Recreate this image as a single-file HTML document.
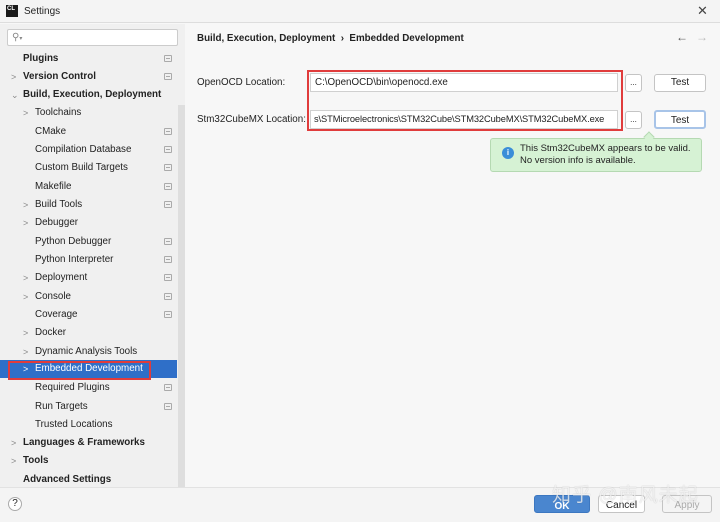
<!DOCTYPE html>
<html><head><meta charset="utf-8"><style>
*{margin:0;padding:0;box-sizing:border-box}
body{width:720px;height:522px;overflow:hidden;background:#f7f7f7;font-family:"Liberation Sans","Noto Sans CJK SC",sans-serif;font-size:9.8px;color:#222;position:relative}
.abs{position:absolute}
.row{position:absolute;left:0;width:177px;height:18px;line-height:18px;white-space:nowrap}
.row .t{position:absolute}
.b{font-weight:bold}
.arr{position:absolute;color:#888;font-size:9px}
.ic{position:absolute;left:164px;top:5px;width:8px;height:7px;border:1px solid #aaa;border-radius:1px}
.ic:after{content:"";position:absolute;left:1px;right:1px;top:2px;height:1px;background:#aaa}
.btn{position:absolute;background:#fff;border:1px solid #c4c4c4;border-radius:3px;text-align:center;font-size:10px}
</style></head><body>
<div class="abs" style="left:0;top:0;width:720px;height:23px;background:#f4f4f4;border-bottom:1px solid #ddd"></div>
<div class="abs" style="left:6px;top:5px;width:12px;height:12px;background:#1a1a1a;color:#fff;font-size:6px;font-weight:bold;line-height:8px;padding-left:1px">CL</div>
<div class="abs" style="left:24px;top:6px;font-size:10px">Settings</div>
<div class="abs" style="left:697px;top:3px;font-size:13px;color:#444">✕</div>
<div class="abs" style="left:0;top:24px;width:185px;height:464px;background:#f0f0f0"></div>
<div class="abs" style="left:178px;top:105px;width:7px;height:383px;background:#dedede"></div>
<div class="abs" style="left:7px;top:29px;width:171px;height:17px;background:#fff;border:1px solid #ccc;border-radius:2px;color:#888;font-size:10px;padding-left:4px;line-height:15px">⚲<span style="font-size:6px">▾</span></div>

<div class="row" style="top:50px"><span class="t b" style="left:23px">Plugins</span><span class="ic"></span></div>
<div class="row" style="top:68px"><span class="arr" style="left:11px">&gt;</span><span class="t b" style="left:23px">Version Control</span><span class="ic"></span></div>
<div class="row" style="top:86px"><span class="arr" style="left:11px">⌄</span><span class="t b" style="left:23px">Build, Execution, Deployment</span></div>
<div class="row" style="top:104px"><span class="arr" style="left:23px">&gt;</span><span class="t" style="left:35px">Toolchains</span></div>
<div class="row" style="top:123px"><span class="t" style="left:35px">CMake</span><span class="ic"></span></div>
<div class="row" style="top:141px"><span class="t" style="left:35px">Compilation Database</span><span class="ic"></span></div>
<div class="row" style="top:159px"><span class="t" style="left:35px">Custom Build Targets</span><span class="ic"></span></div>
<div class="row" style="top:178px"><span class="t" style="left:35px">Makefile</span><span class="ic"></span></div>
<div class="row" style="top:196px"><span class="arr" style="left:23px">&gt;</span><span class="t" style="left:35px">Build Tools</span><span class="ic"></span></div>
<div class="row" style="top:214px"><span class="arr" style="left:23px">&gt;</span><span class="t" style="left:35px">Debugger</span></div>
<div class="row" style="top:233px"><span class="t" style="left:35px">Python Debugger</span><span class="ic"></span></div>
<div class="row" style="top:251px"><span class="t" style="left:35px">Python Interpreter</span><span class="ic"></span></div>
<div class="row" style="top:269px"><span class="arr" style="left:23px">&gt;</span><span class="t" style="left:35px">Deployment</span><span class="ic"></span></div>
<div class="row" style="top:288px"><span class="arr" style="left:23px">&gt;</span><span class="t" style="left:35px">Console</span><span class="ic"></span></div>
<div class="row" style="top:306px"><span class="t" style="left:35px">Coverage</span><span class="ic"></span></div>
<div class="row" style="top:324px"><span class="arr" style="left:23px">&gt;</span><span class="t" style="left:35px">Docker</span></div>
<div class="row" style="top:343px"><span class="arr" style="left:23px">&gt;</span><span class="t" style="left:35px">Dynamic Analysis Tools</span></div>
<div class="row" style="top:360px;background:#2f6fc8;color:#fff"><span class="arr" style="left:23px;color:#fff">&gt;</span><span class="t" style="left:35px">Embedded Development</span></div>
<div class="abs" style="left:8px;top:361px;width:143px;height:19px;border:2px solid #e03c3c"></div>
<div class="row" style="top:379px"><span class="t" style="left:35px">Required Plugins</span><span class="ic"></span></div>
<div class="row" style="top:398px"><span class="t" style="left:35px">Run Targets</span><span class="ic"></span></div>
<div class="row" style="top:416px"><span class="t" style="left:35px">Trusted Locations</span></div>
<div class="row" style="top:434px"><span class="arr" style="left:11px">&gt;</span><span class="t b" style="left:23px">Languages &amp; Frameworks</span></div>
<div class="row" style="top:452px"><span class="arr" style="left:11px">&gt;</span><span class="t b" style="left:23px">Tools</span></div>
<div class="row" style="top:471px"><span class="t b" style="left:23px">Advanced Settings</span></div>

<div class="abs b" style="left:197px;top:33px">Build, Execution, Deployment &nbsp;›&nbsp; Embedded Development</div>
<div class="abs" style="left:676px;top:30px;font-size:12px;color:#555">←</div>
<div class="abs" style="left:696px;top:30px;font-size:12px;color:#bbb">→</div>

<div class="abs" style="left:197px;top:77px">OpenOCD Location:</div>
<div class="abs" style="left:197px;top:114px">Stm32CubeMX Location:</div>
<div class="abs" style="left:307px;top:70px;width:316px;height:61px;border:2px solid #e03c3c"></div>
<div class="abs" style="left:310px;top:73px;width:308px;height:19px;background:#fff;border:1px solid #d0d0d0;padding-left:4px;line-height:17px">C:\OpenOCD\bin\openocd.exe</div>
<div class="abs" style="left:310px;top:110px;width:308px;height:19px;background:#fff;border:1px solid #d0d0d0;padding-left:3px;line-height:17px;white-space:nowrap;overflow:hidden;font-size:9.3px;letter-spacing:-0.1px">s\STMicroelectronics\STM32Cube\STM32CubeMX\STM32CubeMX.exe</div>
<div class="btn" style="left:625px;top:74px;width:17px;height:18px;line-height:16px;font-size:8px">...</div>
<div class="btn" style="left:625px;top:111px;width:17px;height:18px;line-height:16px;font-size:8px">...</div>
<div class="btn" style="left:654px;top:74px;width:52px;height:18px;line-height:16px">Test</div>
<div class="btn" style="left:654px;top:110px;width:52px;height:19px;line-height:17px;border:2px solid #a8c4e8">Test</div>
<div class="abs" style="left:490px;top:138px;width:212px;height:34px;background:#d6f2d4;border:1px solid #b5d9b2;border-radius:3px"></div>
<div class="abs" style="left:645px;top:133px;width:8px;height:8px;background:#d6f2d4;border-left:1px solid #b5d9b2;border-top:1px solid #b5d9b2;transform:rotate(45deg)"></div>
<div class="abs" style="left:502px;top:147px;width:12px;height:12px;border-radius:50%;background:#3b8ed8;color:#fff;font-size:8px;font-weight:bold;text-align:center;line-height:12px">i</div>
<div class="abs" style="left:520px;top:143px;line-height:12px;font-size:9.5px">This Stm32CubeMX appears to be valid.<br>No version info is available.</div>

<div class="abs" style="left:0;top:487px;width:720px;height:35px;background:#f4f4f4;border-top:1px solid #e2e2e2"></div>
<div class="abs" style="left:8px;top:497px;width:14px;height:14px;border:1px solid #aaa;border-radius:50%;background:#fff;text-align:center;line-height:12px;font-size:10px">?</div>
<div class="btn" style="left:534px;top:495px;width:56px;height:18px;background:#4a86cf;border-color:#3c77c0;color:#fff;font-weight:bold;line-height:22px">OK</div>
<div class="btn" style="left:598px;top:495px;width:47px;height:18px;line-height:20px">Cancel</div>
<div class="btn" style="left:662px;top:495px;width:50px;height:18px;line-height:20px;color:#aaa;background:#f4f4f4">Apply</div>
<div class="abs" style="left:552px;top:480px;font-size:19px;color:rgba(255,255,255,0.75);text-shadow:0 0 1px rgba(0,0,0,0.25);letter-spacing:1px">知乎 @南风未起</div>
</body></html>
